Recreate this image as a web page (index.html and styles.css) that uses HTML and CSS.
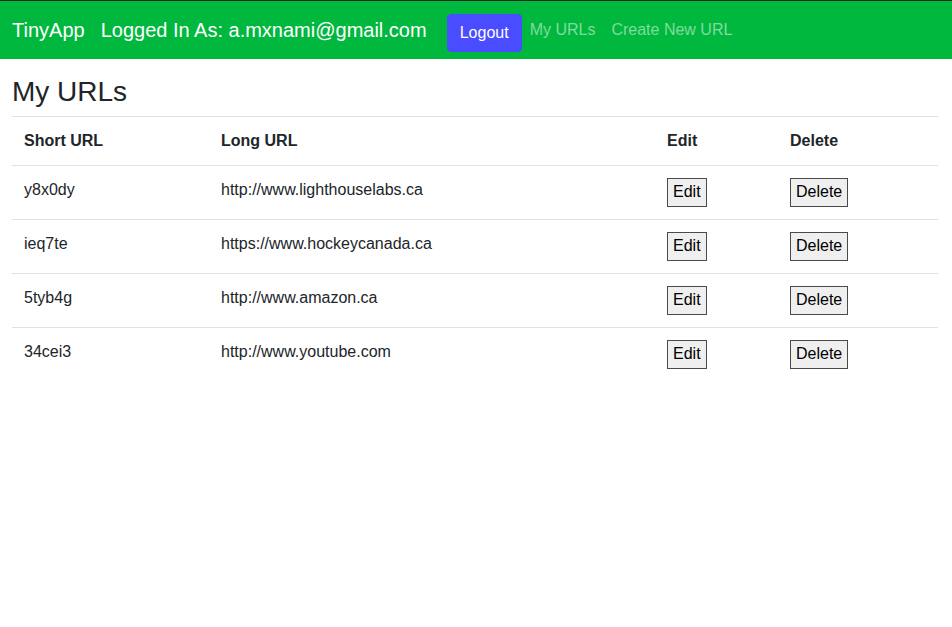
FILE: index.html
```html
<!DOCTYPE html>
<html lang="en">
<head>
<meta charset="utf-8">
<title>TinyApp</title>
<link rel="stylesheet" href="styles.css">
</head>
<body>
<nav class="navbar">
  <span class="brand">TinyApp</span>
  <span class="user">Logged In As: a.mxnami@gmail.com</span>
  <button class="logout">Logout</button>
  <a class="nav-link" href="#">My URLs</a>
  <a class="nav-link" href="#">Create New URL</a>
</nav>
<main class="main">
  <h3 class="title">My URLs</h3>
  <table class="urls">
    <colgroup>
      <col class="c1"><col class="c2"><col class="c3"><col class="c4">
    </colgroup>
    <thead>
      <tr><th>Short URL</th><th>Long URL</th><th>Edit</th><th>Delete</th></tr>
    </thead>
    <tbody>
      <tr><td>y8x0dy</td><td>http://www.lighthouselabs.ca</td><td><button class="btn">Edit</button></td><td><button class="btn">Delete</button></td></tr>
      <tr><td>ieq7te</td><td>https://www.hockeycanada.ca</td><td><button class="btn">Edit</button></td><td><button class="btn">Delete</button></td></tr>
      <tr><td>5tyb4g</td><td>http://www.amazon.ca</td><td><button class="btn">Edit</button></td><td><button class="btn">Delete</button></td></tr>
      <tr><td>34cei3</td><td>http://www.youtube.com</td><td><button class="btn">Edit</button></td><td><button class="btn">Delete</button></td></tr>
    </tbody>
  </table>
</main>
</body>
</html>
```
FILE: styles.css
```css
* { box-sizing: border-box; }
html, body {
  margin: 0;
  padding: 0;
  background: #fff;
  font-family: "Liberation Sans", Arial, sans-serif;
  font-size: 16px;
  line-height: 1.5;
  color: #212529;
}
.navbar {
  border-top: 1px solid #1f2a24;
  background: #00b83d;
  height: 59px;
  display: flex;
  align-items: center;
  padding: 5px 12px 0 12px;
}
.brand {
  font-size: 20px;
  color: #fff;
  line-height: 30px;
  margin-right: 16px;
  margin-top: -5px;
}
.user {
  font-size: 20px;
  color: #fff;
  line-height: 30px;
  margin-right: 20px;
  margin-top: -5px;
}
.logout {
  font-family: inherit;
  font-size: 16px;
  line-height: 24px;
  color: #fff;
  background: #4a4cff;
  border: 1px solid #4a4cff;
  border-radius: 4px;
  padding: 6px 12px;
  height: 38px;
  width: 75px;
  margin-right: 0;
}
.nav-link {
  font-size: 16px;
  color: rgba(255, 255, 255, 0.5);
  text-decoration: none;
  padding: 0 8px;
  margin-top: -5px;
}
.main {
  padding: 16px 14px 0 12px;
}
.title {
  font-size: 28px;
  font-weight: 400;
  line-height: 33px;
  margin: 0 0 8px 0;
}
.urls {
  width: 926px;
  border-collapse: collapse;
  table-layout: fixed;
}
.c1 { width: 197px; }
.c2 { width: 446px; }
.c3 { width: 123px; }
.c4 { width: 160px; }
.urls th, .urls td {
  text-align: left;
  vertical-align: top;
  padding: 12px;
  border-top: 1px solid #dee2e6;
}
.urls th { font-weight: 700; }
.btn {
  font-family: inherit;
  font-size: 16px;
  line-height: 24px;
  color: #000;
  background: #efefef;
  border: 1px solid #4a4a4a;
  border-radius: 0;
  padding: 1px 5px 2px;
  margin: 0;
}
```
